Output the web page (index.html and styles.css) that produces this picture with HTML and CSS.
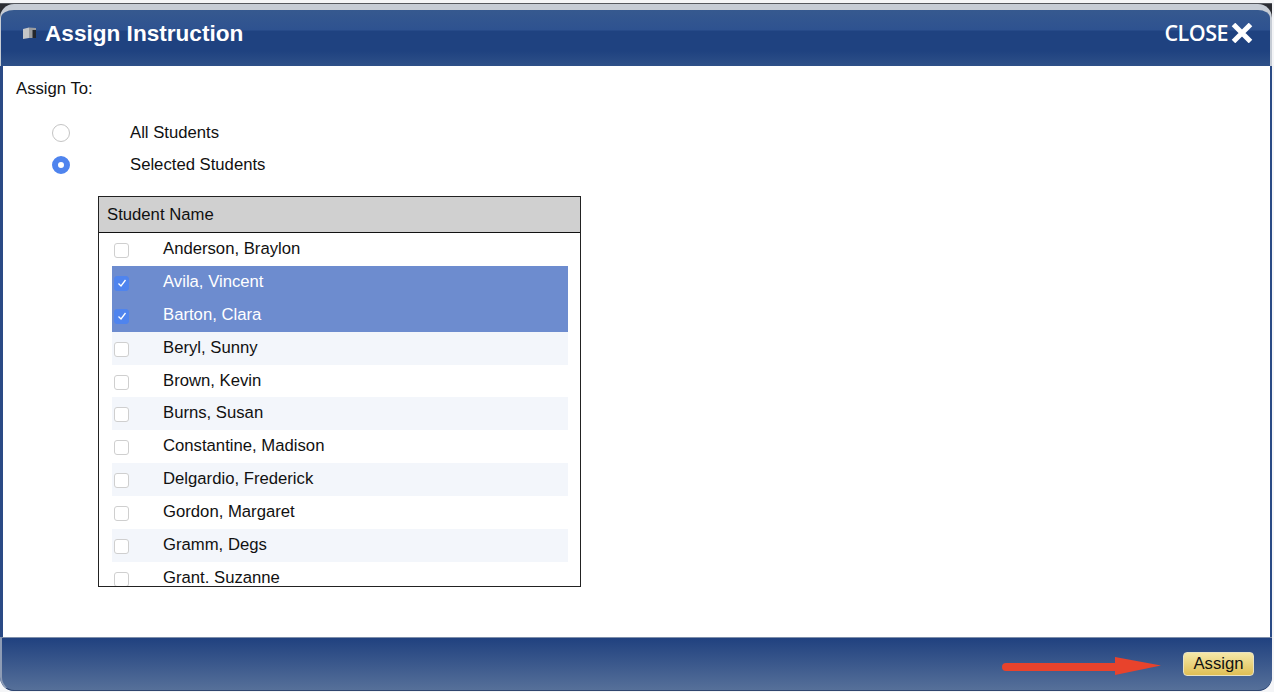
FILE: index.html
```html
<!DOCTYPE html>
<html lang="en">
<head>
<meta charset="utf-8">
<title>Assign Instruction</title>
<link rel="stylesheet" href="styles.css">
</head>
<body>
<div class="window">
  <header class="titlebar">
    <div class="title">
      <svg class="book" width="15" height="14" viewBox="0 0 15 14"><path d="M1 3 L7 1.500 V12 L1 13 Z" fill="#c3c5c7"/><path d="M7 1.500 L14 2 V12 L7 12 Z" fill="#9a9c9f"/><path d="M10.500 4 H14 V12 H10.500 Z" fill="#23262c"/></svg>
      <h1>Assign Instruction</h1>
    </div>
    <div class="close"><span>CLOSE</span><svg width="22" height="20" viewBox="0 0 22 20"><path d="M2.500 1.500 L19.500 18.500 M19.500 1.500 L2.500 18.500" stroke="#fff" stroke-width="5"/></svg></div>
  </header>
  <main class="content">
    <p class="assign-to">Assign To:</p>
    <div class="choice"><span class="radio"></span><span>All Students</span></div>
    <div class="choice"><span class="radio on"></span><span>Selected Students</span></div>
    <section class="picker">
      <div class="picker-head">Student Name</div>
      <div class="picker-list">
        <div class="row"><span class="box"></span><span>Anderson, Braylon</span></div>
        <div class="row sel"><span class="box on"><svg width="16" height="16" viewBox="0 0 16 16"><path d="M4.500 8.500 L7 11 L11.500 5" fill="none" stroke="#fff" stroke-width="1.300"/></svg></span><span>Avila, Vincent</span></div>
        <div class="row sel"><span class="box on"><svg width="16" height="16" viewBox="0 0 16 16"><path d="M4.500 8.500 L7 11 L11.500 5" fill="none" stroke="#fff" stroke-width="1.300"/></svg></span><span>Barton, Clara</span></div>
        <div class="row alt"><span class="box"></span><span>Beryl, Sunny</span></div>
        <div class="row"><span class="box"></span><span>Brown, Kevin</span></div>
        <div class="row alt"><span class="box"></span><span>Burns, Susan</span></div>
        <div class="row"><span class="box"></span><span>Constantine, Madison</span></div>
        <div class="row alt"><span class="box"></span><span>Delgardio, Frederick</span></div>
        <div class="row"><span class="box"></span><span>Gordon, Margaret</span></div>
        <div class="row alt"><span class="box"></span><span>Gramm, Degs</span></div>
        <div class="row"><span class="box"></span><span>Grant. Suzanne</span></div>
      </div>
    </section>
  </main>
  <footer class="footer">
    <button class="assign" type="button">Assign</button>
    <svg class="arrow" width="170" height="24" viewBox="0 0 170 24"><path d="M7 13 H116" fill="none" stroke="#e8432c" stroke-width="8" stroke-linecap="round"/><path d="M116 3 L162 11.500 L116 21 Z" fill="#e8432c"/></svg>
  </footer>
</div>
</body>
</html>
```
FILE: styles.css
```css
* { box-sizing: border-box; }
html, body { margin: 0; height: 100%; }
body {
  background: #f4f5f7;
  font-family: "Liberation Sans", Arial, sans-serif;
  font-size: 16.7px;
  color: #111;
  overflow: hidden;
  padding-top: 3px;
}
.window {
  width: 1272px;
  height: 688px;
  display: flex;
  flex-direction: column;
  background: linear-gradient(#2b2d33 0, #2b2d33 20px, #2a4a85 20px);
  border-top: 1px solid #55585e;
  border-radius: 0 0 14px 14px;
  overflow: hidden;
}
.titlebar {
  height: 62px;
  flex: none;
  display: flex;
  align-items: center;
  justify-content: space-between;
  border-top: 6px solid #c6ccd5;
  border-left: 1px solid #c6ccd5;
  border-right: 2px solid #c6ccd5;
  border-radius: 14px 14px 0 0;
  padding: 0 17px 10px 21px;
  background: linear-gradient(#36598f 0, #2e5290 20px, #1f4280 21px, #1f4280 41px, #2e5088 56px);
  color: #fff;
}
.title { display: flex; align-items: center; gap: 8px; }
.title h1 { margin: 2px 0 0; font-size: 22.600px; font-weight: 700; line-height: 26px; }
.close {
  display: flex;
  align-items: center;
  gap: 3px;
  font-family: "Open Sans", sans-serif;
  font-weight: 600;
  font-size: 21.500px;
  letter-spacing: -0.500px;
}
.close span { margin-bottom: 1px; }
.content {
  flex: 1;
  margin: 0 2px 0 3px;
  background: #fff;
  padding: 13px 13px;
}
.assign-to { margin: 0 0 18px; line-height: 20px; }
.choice {
  display: flex;
  align-items: center;
  height: 32px;
  padding-left: 36px;
  gap: 60px;
}
.radio {
  width: 18px;
  height: 18px;
  border-radius: 50%;
  border: 1px solid #c4c4c4;
  background: #fff;
}
.radio.on {
  border: 6px solid #4f84ee;
}
.picker {
  width: 483px;
  height: 391px;
  margin: 15px 0 0 82px;
  border: 1px solid #222;
  display: flex;
  flex-direction: column;
  overflow: hidden;
}
.picker-head {
  flex: none;
  height: 36px;
  line-height: 35px;
  padding-left: 8px;
  background: #d0d0d0;
  border-bottom: 1px solid #111;
}
.picker-list {
  padding: 0 12px 0 13px;
  overflow: hidden;
}
.row {
  height: 32.900px;
  display: flex;
  align-items: center;
  gap: 34px;
  padding-left: 2px;
  padding-bottom: 1px;
  white-space: nowrap;
}
.row.alt { background: #f3f6fb; }
.row.sel { background: #6d8ccf; color: #fff; }
.box {
  flex: none;
  width: 15px;
  height: 15px;
  margin-top: 3px;
  border: 1px solid #cfcfcf;
  border-radius: 3px;
  background: #fff;
  display: flex;
  align-items: center;
  justify-content: center;
}
.box.on { background: #4f84ee; border-color: #4f84ee; }
.box svg { flex: none; }
.footer {
  position: relative;
  flex: none;
  height: 54px;
  border-top: 1px solid #7f8fab;
  border-bottom: 1px solid #30466f;
  border-left: 2px solid #8e9cb5;
  border-radius: 0 0 14px 14px;
  background: linear-gradient(#20417f, #567099);
  display: flex;
  justify-content: flex-end;
  align-items: center;
  padding: 0 18px 0 0;
}
.assign {
  width: 71px;
  height: 24px;
  padding: 0;
  font: 16.700px "Liberation Sans", Arial, sans-serif;
  color: #111;
  border: 1px solid #e8e2c2;
  border-radius: 4px;
  background: linear-gradient(#f5e8a8, #e0bf55);
}
.arrow { position: absolute; left: 997px; top: 16px; }
```
